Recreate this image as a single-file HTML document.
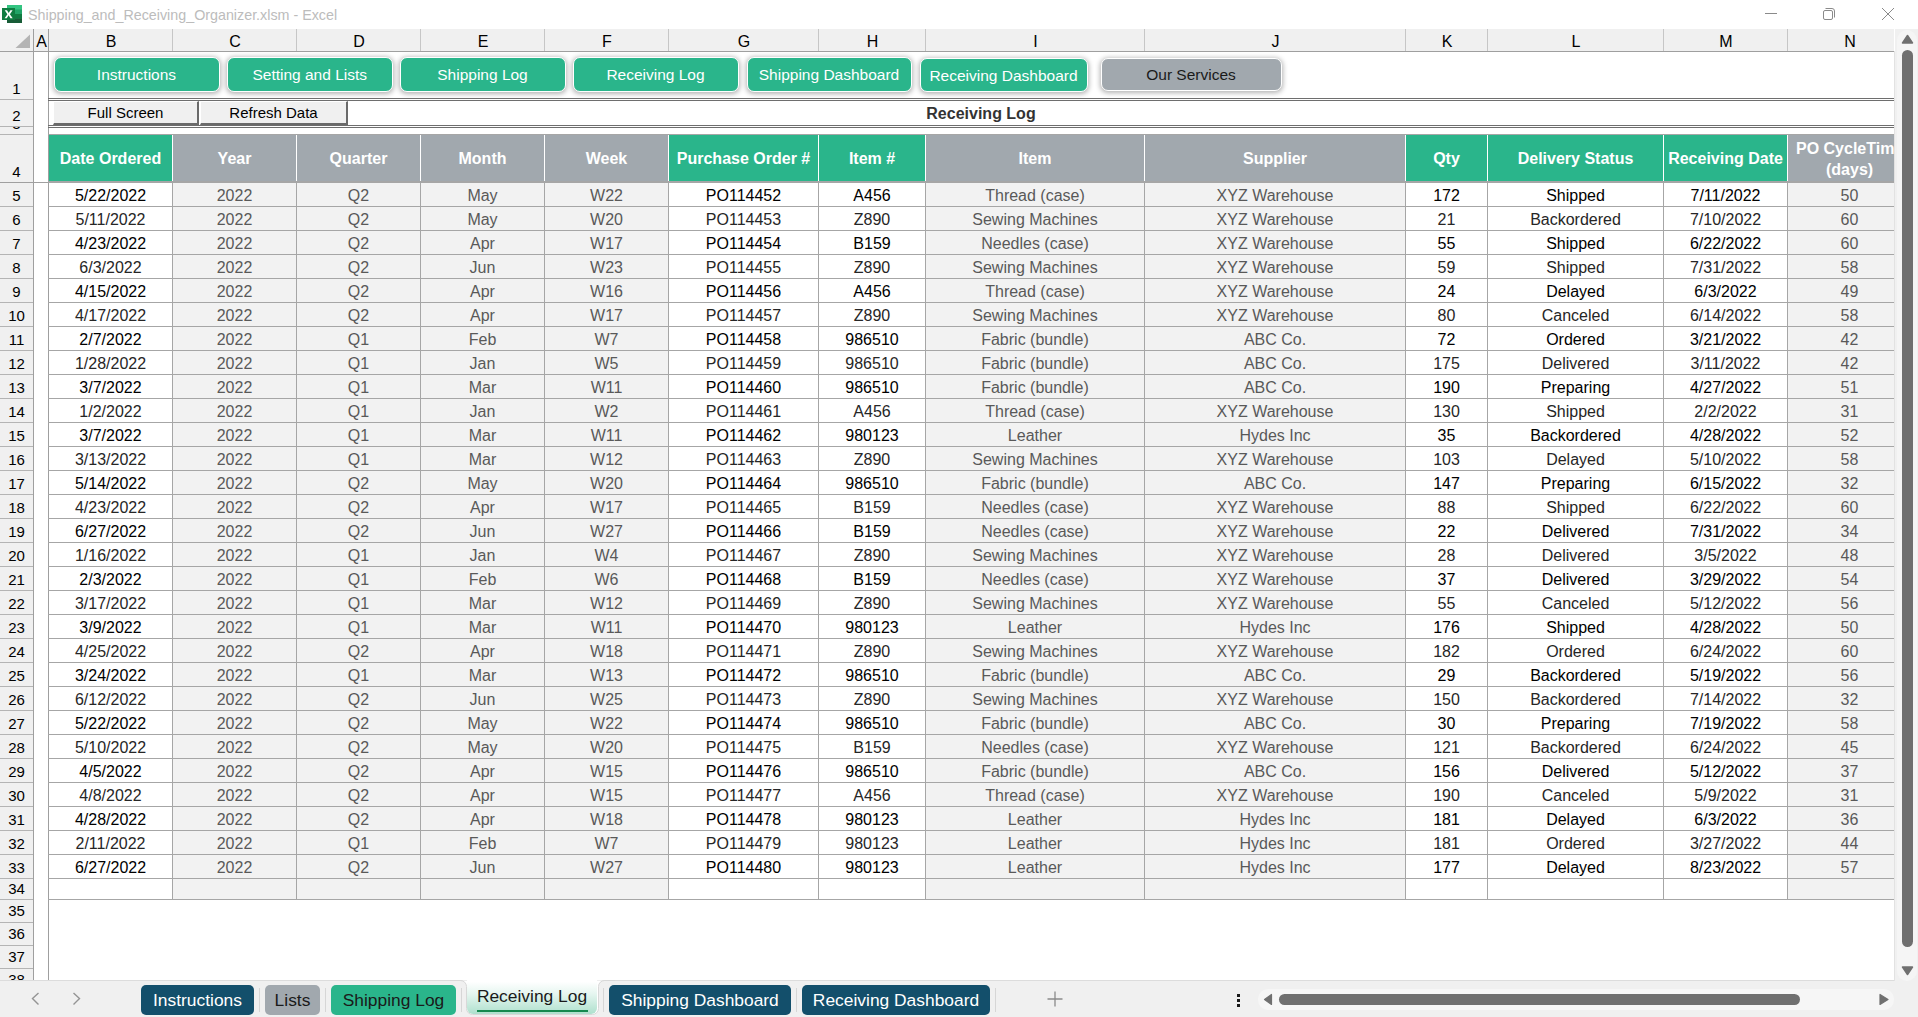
<!DOCTYPE html><html><head><meta charset="utf-8"><style>
*{box-sizing:border-box}
html,body{margin:0;padding:0}
body{width:1918px;height:1017px;overflow:hidden;position:relative;background:#fff;font-family:"Liberation Sans",sans-serif}
.a{position:absolute}
.ch{position:absolute;top:29px;height:22px;font-size:16px;color:#000;text-align:center;line-height:22px;padding-top:2px;padding-left:2px}
.rh{position:absolute;left:0;width:33px;font-size:15px;color:#000;text-align:center;overflow:hidden}
.cell{position:absolute;font-size:16px;text-align:center;white-space:nowrap;overflow:hidden;padding-top:1px}
.hl{position:absolute;height:1px;background:#a6a6a6}
.vl{position:absolute;width:1px;background:#a6a6a6}
.nb{position:absolute;border-radius:7px;background:#2ab58b;color:#fff;font-size:15.5px;text-align:center;border:1.5px solid #fff;box-shadow:0 1px 5px 1px rgba(0,0,0,.3);white-space:nowrap}
.tab{position:absolute;top:985px;height:30px;border-radius:5px;font-size:17.4px;text-align:center;line-height:30px;white-space:nowrap}
.sep{position:absolute;top:988px;width:1px;height:24px;background:#d6d6d6}
</style></head><body>

<svg class="a" style="left:0;top:0" width="26" height="28" viewBox="0 0 26 28">
<rect x="7" y="5" width="15" height="18" fill="#21a366"/>
<rect x="7" y="5" width="15" height="4.5" fill="#33c481"/>
<rect x="7" y="14" width="15" height="4.5" fill="#107c41"/>
<rect x="7" y="18.5" width="15" height="4.5" fill="#185c37"/>
<rect x="2" y="8" width="13" height="12" fill="#107c41"/>
<path d="M4.7 10.2h2.3l1.7 2.9 1.7-2.9h2.2l-2.7 4 2.8 4.1h-2.3l-1.8-3-1.8 3h-2.2l2.8-4.1z" fill="#fff"/>
</svg>
<div class="a" style="left:28px;top:6px;font-size:14.3px;color:#bcbcbc;white-space:nowrap;line-height:18px">Shipping_and_Receiving_Organizer.xlsm - Excel</div>
<svg class="a" style="left:1750px;top:0" width="168" height="29" viewBox="1750 0 168 29">
<path d="M1765 13.5h12" stroke="#8a8a8a" stroke-width="1"/>
<rect x="1823.5" y="10.5" width="9" height="9" rx="1.5" fill="none" stroke="#8a8a8a"/>
<path d="M1825.5 8.5h6.5a2.5 2.5 0 0 1 2.5 2.5v6.5" fill="none" stroke="#8a8a8a"/>
<path d="M1882 8l12 12M1894 8l-12 12" stroke="#8a8a8a" stroke-width="1"/>
</svg>
<div class="a" style="left:0;top:29px;width:1894px;height:22px;background:#f0f0f0"></div>
<div class="a" style="left:0;top:51px;width:33px;height:929px;background:#f0f0f0"></div>
<svg class="a" style="left:0;top:29px" width="33" height="22"><path d="M30 5.5V19H15.5z" fill="#b4b4b4"/></svg>
<div class="ch" style="left:33px;width:15px">A</div>
<div class="ch" style="left:48px;width:124px">B</div>
<div class="ch" style="left:172px;width:124px">C</div>
<div class="ch" style="left:296px;width:124px">D</div>
<div class="ch" style="left:420px;width:124px">E</div>
<div class="ch" style="left:544px;width:124px">F</div>
<div class="ch" style="left:668px;width:150px">G</div>
<div class="ch" style="left:818px;width:107px">H</div>
<div class="ch" style="left:925px;width:219px">I</div>
<div class="ch" style="left:1144px;width:261px">J</div>
<div class="ch" style="left:1405px;width:82px">K</div>
<div class="ch" style="left:1487px;width:176px">L</div>
<div class="ch" style="left:1663px;width:124px">M</div>
<div class="ch" style="left:1787px;width:124px">N</div>
<div class="a" style="left:33px;top:29px;width:1px;height:22px;background:#c6c6c6"></div>
<div class="a" style="left:48px;top:29px;width:1px;height:22px;background:#c6c6c6"></div>
<div class="a" style="left:172px;top:29px;width:1px;height:22px;background:#c6c6c6"></div>
<div class="a" style="left:296px;top:29px;width:1px;height:22px;background:#c6c6c6"></div>
<div class="a" style="left:420px;top:29px;width:1px;height:22px;background:#c6c6c6"></div>
<div class="a" style="left:544px;top:29px;width:1px;height:22px;background:#c6c6c6"></div>
<div class="a" style="left:668px;top:29px;width:1px;height:22px;background:#c6c6c6"></div>
<div class="a" style="left:818px;top:29px;width:1px;height:22px;background:#c6c6c6"></div>
<div class="a" style="left:925px;top:29px;width:1px;height:22px;background:#c6c6c6"></div>
<div class="a" style="left:1144px;top:29px;width:1px;height:22px;background:#c6c6c6"></div>
<div class="a" style="left:1405px;top:29px;width:1px;height:22px;background:#c6c6c6"></div>
<div class="a" style="left:1487px;top:29px;width:1px;height:22px;background:#c6c6c6"></div>
<div class="a" style="left:1663px;top:29px;width:1px;height:22px;background:#c6c6c6"></div>
<div class="a" style="left:1787px;top:29px;width:1px;height:22px;background:#c6c6c6"></div>
<div class="hl" style="left:0;top:51px;width:1894px;background:#9f9f9f"></div>
<div class="vl" style="left:33px;top:29px;height:951px;background:#9f9f9f"></div>
<div class="vl" style="left:48px;top:29px;height:951px;background:#9f9f9f"></div>
<div class="a" style="left:0;top:99px;width:33px;height:1px;background:#b4b4b4"></div>
<div class="rh" style="top:52px;height:47px"><span style="position:absolute;left:0;width:33px;top:26.799999999999997px;line-height:20px">1</span></div>
<div class="a" style="left:0;top:126px;width:33px;height:1px;background:#b4b4b4"></div>
<div class="rh" style="top:100px;height:26px"><span style="position:absolute;left:0;width:33px;top:5.800000000000001px;line-height:20px">2</span></div>
<div class="a" style="left:0;top:134px;width:33px;height:1px;background:#b4b4b4"></div>
<div class="rh" style="top:127px;height:7px"><span style="position:absolute;left:0;width:33px;top:-13.2px;line-height:20px">3</span></div>
<div class="a" style="left:0;top:182px;width:33px;height:1px;background:#b4b4b4"></div>
<div class="rh" style="top:135px;height:47px"><span style="position:absolute;left:0;width:33px;top:26.799999999999997px;line-height:20px">4</span></div>
<div class="a" style="left:0;top:206px;width:33px;height:1px;background:#b4b4b4"></div>
<div class="rh" style="top:183px;height:23px"><span style="position:absolute;left:0;width:33px;top:2.8000000000000007px;line-height:20px">5</span></div>
<div class="a" style="left:0;top:230px;width:33px;height:1px;background:#b4b4b4"></div>
<div class="rh" style="top:207px;height:23px"><span style="position:absolute;left:0;width:33px;top:2.8000000000000007px;line-height:20px">6</span></div>
<div class="a" style="left:0;top:254px;width:33px;height:1px;background:#b4b4b4"></div>
<div class="rh" style="top:231px;height:23px"><span style="position:absolute;left:0;width:33px;top:2.8000000000000007px;line-height:20px">7</span></div>
<div class="a" style="left:0;top:278px;width:33px;height:1px;background:#b4b4b4"></div>
<div class="rh" style="top:255px;height:23px"><span style="position:absolute;left:0;width:33px;top:2.8000000000000007px;line-height:20px">8</span></div>
<div class="a" style="left:0;top:302px;width:33px;height:1px;background:#b4b4b4"></div>
<div class="rh" style="top:279px;height:23px"><span style="position:absolute;left:0;width:33px;top:2.8000000000000007px;line-height:20px">9</span></div>
<div class="a" style="left:0;top:326px;width:33px;height:1px;background:#b4b4b4"></div>
<div class="rh" style="top:303px;height:23px"><span style="position:absolute;left:0;width:33px;top:2.8000000000000007px;line-height:20px">10</span></div>
<div class="a" style="left:0;top:350px;width:33px;height:1px;background:#b4b4b4"></div>
<div class="rh" style="top:327px;height:23px"><span style="position:absolute;left:0;width:33px;top:2.8000000000000007px;line-height:20px">11</span></div>
<div class="a" style="left:0;top:374px;width:33px;height:1px;background:#b4b4b4"></div>
<div class="rh" style="top:351px;height:23px"><span style="position:absolute;left:0;width:33px;top:2.8000000000000007px;line-height:20px">12</span></div>
<div class="a" style="left:0;top:398px;width:33px;height:1px;background:#b4b4b4"></div>
<div class="rh" style="top:375px;height:23px"><span style="position:absolute;left:0;width:33px;top:2.8000000000000007px;line-height:20px">13</span></div>
<div class="a" style="left:0;top:422px;width:33px;height:1px;background:#b4b4b4"></div>
<div class="rh" style="top:399px;height:23px"><span style="position:absolute;left:0;width:33px;top:2.8000000000000007px;line-height:20px">14</span></div>
<div class="a" style="left:0;top:446px;width:33px;height:1px;background:#b4b4b4"></div>
<div class="rh" style="top:423px;height:23px"><span style="position:absolute;left:0;width:33px;top:2.8000000000000007px;line-height:20px">15</span></div>
<div class="a" style="left:0;top:470px;width:33px;height:1px;background:#b4b4b4"></div>
<div class="rh" style="top:447px;height:23px"><span style="position:absolute;left:0;width:33px;top:2.8000000000000007px;line-height:20px">16</span></div>
<div class="a" style="left:0;top:494px;width:33px;height:1px;background:#b4b4b4"></div>
<div class="rh" style="top:471px;height:23px"><span style="position:absolute;left:0;width:33px;top:2.8000000000000007px;line-height:20px">17</span></div>
<div class="a" style="left:0;top:518px;width:33px;height:1px;background:#b4b4b4"></div>
<div class="rh" style="top:495px;height:23px"><span style="position:absolute;left:0;width:33px;top:2.8000000000000007px;line-height:20px">18</span></div>
<div class="a" style="left:0;top:542px;width:33px;height:1px;background:#b4b4b4"></div>
<div class="rh" style="top:519px;height:23px"><span style="position:absolute;left:0;width:33px;top:2.8000000000000007px;line-height:20px">19</span></div>
<div class="a" style="left:0;top:566px;width:33px;height:1px;background:#b4b4b4"></div>
<div class="rh" style="top:543px;height:23px"><span style="position:absolute;left:0;width:33px;top:2.8000000000000007px;line-height:20px">20</span></div>
<div class="a" style="left:0;top:590px;width:33px;height:1px;background:#b4b4b4"></div>
<div class="rh" style="top:567px;height:23px"><span style="position:absolute;left:0;width:33px;top:2.8000000000000007px;line-height:20px">21</span></div>
<div class="a" style="left:0;top:614px;width:33px;height:1px;background:#b4b4b4"></div>
<div class="rh" style="top:591px;height:23px"><span style="position:absolute;left:0;width:33px;top:2.8000000000000007px;line-height:20px">22</span></div>
<div class="a" style="left:0;top:638px;width:33px;height:1px;background:#b4b4b4"></div>
<div class="rh" style="top:615px;height:23px"><span style="position:absolute;left:0;width:33px;top:2.8000000000000007px;line-height:20px">23</span></div>
<div class="a" style="left:0;top:662px;width:33px;height:1px;background:#b4b4b4"></div>
<div class="rh" style="top:639px;height:23px"><span style="position:absolute;left:0;width:33px;top:2.8000000000000007px;line-height:20px">24</span></div>
<div class="a" style="left:0;top:686px;width:33px;height:1px;background:#b4b4b4"></div>
<div class="rh" style="top:663px;height:23px"><span style="position:absolute;left:0;width:33px;top:2.8000000000000007px;line-height:20px">25</span></div>
<div class="a" style="left:0;top:710px;width:33px;height:1px;background:#b4b4b4"></div>
<div class="rh" style="top:687px;height:23px"><span style="position:absolute;left:0;width:33px;top:2.8000000000000007px;line-height:20px">26</span></div>
<div class="a" style="left:0;top:734px;width:33px;height:1px;background:#b4b4b4"></div>
<div class="rh" style="top:711px;height:23px"><span style="position:absolute;left:0;width:33px;top:2.8000000000000007px;line-height:20px">27</span></div>
<div class="a" style="left:0;top:758px;width:33px;height:1px;background:#b4b4b4"></div>
<div class="rh" style="top:735px;height:23px"><span style="position:absolute;left:0;width:33px;top:2.8000000000000007px;line-height:20px">28</span></div>
<div class="a" style="left:0;top:782px;width:33px;height:1px;background:#b4b4b4"></div>
<div class="rh" style="top:759px;height:23px"><span style="position:absolute;left:0;width:33px;top:2.8000000000000007px;line-height:20px">29</span></div>
<div class="a" style="left:0;top:806px;width:33px;height:1px;background:#b4b4b4"></div>
<div class="rh" style="top:783px;height:23px"><span style="position:absolute;left:0;width:33px;top:2.8000000000000007px;line-height:20px">30</span></div>
<div class="a" style="left:0;top:830px;width:33px;height:1px;background:#b4b4b4"></div>
<div class="rh" style="top:807px;height:23px"><span style="position:absolute;left:0;width:33px;top:2.8000000000000007px;line-height:20px">31</span></div>
<div class="a" style="left:0;top:854px;width:33px;height:1px;background:#b4b4b4"></div>
<div class="rh" style="top:831px;height:23px"><span style="position:absolute;left:0;width:33px;top:2.8000000000000007px;line-height:20px">32</span></div>
<div class="a" style="left:0;top:878px;width:33px;height:1px;background:#b4b4b4"></div>
<div class="rh" style="top:855px;height:23px"><span style="position:absolute;left:0;width:33px;top:2.8000000000000007px;line-height:20px">33</span></div>
<div class="a" style="left:0;top:899px;width:33px;height:1px;background:#b4b4b4"></div>
<div class="rh" style="top:879px;height:20px"><span style="position:absolute;left:0;width:33px;top:-0.1999999999999993px;line-height:20px">34</span></div>
<div class="a" style="left:0;top:922px;width:33px;height:1px;background:#b4b4b4"></div>
<div class="rh" style="top:900px;height:22px"><span style="position:absolute;left:0;width:33px;top:0.8000000000000007px;line-height:20px">35</span></div>
<div class="a" style="left:0;top:945px;width:33px;height:1px;background:#b4b4b4"></div>
<div class="rh" style="top:923px;height:22px"><span style="position:absolute;left:0;width:33px;top:0.8000000000000007px;line-height:20px">36</span></div>
<div class="a" style="left:0;top:968px;width:33px;height:1px;background:#b4b4b4"></div>
<div class="rh" style="top:946px;height:22px"><span style="position:absolute;left:0;width:33px;top:0.8000000000000007px;line-height:20px">37</span></div>
<div class="a" style="left:0;top:991px;width:33px;height:1px;background:#b4b4b4"></div>
<div class="rh" style="top:969px;height:22px"><span style="position:absolute;left:0;width:33px;top:0.8000000000000007px;line-height:20px">38</span></div>
<div class="a" style="left:0;top:980px;width:1918px;height:37px;background:#f0f0f0"></div>
<div class="a" style="left:0;top:182px;width:48px;height:1px;background:#a0a0a0"></div>
<div class="nb" style="left:53.5px;top:56.5px;width:166px;height:35px;background:#2ab58b;color:#fff;line-height:32px;padding-top:1.5px">Instructions</div>
<div class="nb" style="left:226.5px;top:56.5px;width:166.5px;height:35px;background:#2ab58b;color:#fff;line-height:32px;padding-top:1.5px">Setting and Lists</div>
<div class="nb" style="left:399.5px;top:56.5px;width:166px;height:35px;background:#2ab58b;color:#fff;line-height:32px;padding-top:1.5px">Shipping Log</div>
<div class="nb" style="left:572.5px;top:56.5px;width:166px;height:35px;background:#2ab58b;color:#fff;line-height:32px;padding-top:1.5px">Receiving Log</div>
<div class="nb" style="left:746.5px;top:56.5px;width:165px;height:35px;background:#2ab58b;color:#fff;line-height:32px;padding-top:1.5px">Shipping Dashboard</div>
<div class="nb" style="left:919.5px;top:58.0px;width:168px;height:33.5px;background:#2ab58b;color:#fff;line-height:30.5px;padding-top:1.5px">Receiving Dashboard</div>
<div class="nb" style="left:1100.5px;top:57.5px;width:181px;height:33px;background:#a1a8ae;color:#1a1a1a;line-height:30px;padding-top:1.5px">Our Services</div>
<div class="hl" style="left:48px;top:98px;width:1846px;background:#6e6e6e"></div>
<div class="hl" style="left:48px;top:100px;width:1846px;background:#6e6e6e"></div>
<div class="hl" style="left:48px;top:125px;width:1846px;background:#6e6e6e"></div>
<div class="hl" style="left:48px;top:127px;width:1846px;background:#6e6e6e"></div>
<div class="a" style="left:53px;top:101px;width:146px;height:24px;background:#f0f0f0;border-top:1px solid #fff;border-left:1px solid #fff;border-right:2px solid #6a6a6a;border-bottom:2px solid #6a6a6a;font-size:15px;text-align:center;line-height:21px;color:#000">Full Screen</div>
<div class="a" style="left:200px;top:101px;width:148px;height:24px;background:#f0f0f0;border-top:1px solid #fff;border-left:1px solid #fff;border-right:2px solid #6a6a6a;border-bottom:2px solid #6a6a6a;font-size:15px;text-align:center;line-height:21px;color:#000">Refresh Data</div>
<div class="a" style="left:881px;top:102px;width:200px;text-align:center;font-weight:bold;font-size:16px;line-height:24px;color:#333">Receiving Log</div>
<div class="hl" style="left:48px;top:134px;width:1846px;background:#a6a6a6"></div>
<div class="a" style="left:49px;top:135px;width:123px;height:46px;background:#2ab58b;color:#fff;font-weight:bold;font-size:16px;line-height:46px;padding-top:1px;text-align:center;white-space:nowrap;overflow:hidden">Date Ordered</div>
<div class="a" style="left:173px;top:135px;width:123px;height:46px;background:#a1a8ae;color:#fff;font-weight:bold;font-size:16px;line-height:46px;padding-top:1px;text-align:center;white-space:nowrap;overflow:hidden">Year</div>
<div class="a" style="left:297px;top:135px;width:123px;height:46px;background:#a1a8ae;color:#fff;font-weight:bold;font-size:16px;line-height:46px;padding-top:1px;text-align:center;white-space:nowrap;overflow:hidden">Quarter</div>
<div class="a" style="left:421px;top:135px;width:123px;height:46px;background:#a1a8ae;color:#fff;font-weight:bold;font-size:16px;line-height:46px;padding-top:1px;text-align:center;white-space:nowrap;overflow:hidden">Month</div>
<div class="a" style="left:545px;top:135px;width:123px;height:46px;background:#a1a8ae;color:#fff;font-weight:bold;font-size:16px;line-height:46px;padding-top:1px;text-align:center;white-space:nowrap;overflow:hidden">Week</div>
<div class="a" style="left:669px;top:135px;width:149px;height:46px;background:#2ab58b;color:#fff;font-weight:bold;font-size:16px;line-height:46px;padding-top:1px;text-align:center;white-space:nowrap;overflow:hidden">Purchase Order #</div>
<div class="a" style="left:819px;top:135px;width:106px;height:46px;background:#2ab58b;color:#fff;font-weight:bold;font-size:16px;line-height:46px;padding-top:1px;text-align:center;white-space:nowrap;overflow:hidden">Item #</div>
<div class="a" style="left:926px;top:135px;width:218px;height:46px;background:#a1a8ae;color:#fff;font-weight:bold;font-size:16px;line-height:46px;padding-top:1px;text-align:center;white-space:nowrap;overflow:hidden">Item</div>
<div class="a" style="left:1145px;top:135px;width:260px;height:46px;background:#a1a8ae;color:#fff;font-weight:bold;font-size:16px;line-height:46px;padding-top:1px;text-align:center;white-space:nowrap;overflow:hidden">Supplier</div>
<div class="a" style="left:1406px;top:135px;width:81px;height:46px;background:#2ab58b;color:#fff;font-weight:bold;font-size:16px;line-height:46px;padding-top:1px;text-align:center;white-space:nowrap;overflow:hidden">Qty</div>
<div class="a" style="left:1488px;top:135px;width:175px;height:46px;background:#2ab58b;color:#fff;font-weight:bold;font-size:16px;line-height:46px;padding-top:1px;text-align:center;white-space:nowrap;overflow:hidden">Delivery Status</div>
<div class="a" style="left:1664px;top:135px;width:123px;height:46px;background:#2ab58b;color:#fff;font-weight:bold;font-size:16px;line-height:46px;padding-top:1px;text-align:center;white-space:nowrap;overflow:hidden">Receiving Date</div>
<div class="a" style="left:1788px;top:135px;width:123px;height:46px;background:#a1a8ae;color:#fff;font-weight:bold;font-size:16px;line-height:20.5px;padding-top:4.3px;text-align:left;padding-left:8px;white-space:nowrap;overflow:hidden">PO CycleTim<br><span style="padding-left:30px">(days)</span></div>
<div class="a" style="left:172px;top:135px;width:1px;height:46px;background:#fff"></div>
<div class="a" style="left:296px;top:135px;width:1px;height:46px;background:#fff"></div>
<div class="a" style="left:420px;top:135px;width:1px;height:46px;background:#fff"></div>
<div class="a" style="left:544px;top:135px;width:1px;height:46px;background:#fff"></div>
<div class="a" style="left:668px;top:135px;width:1px;height:46px;background:#fff"></div>
<div class="a" style="left:818px;top:135px;width:1px;height:46px;background:#fff"></div>
<div class="a" style="left:925px;top:135px;width:1px;height:46px;background:#fff"></div>
<div class="a" style="left:1144px;top:135px;width:1px;height:46px;background:#fff"></div>
<div class="a" style="left:1405px;top:135px;width:1px;height:46px;background:#fff"></div>
<div class="a" style="left:1487px;top:135px;width:1px;height:46px;background:#fff"></div>
<div class="a" style="left:1663px;top:135px;width:1px;height:46px;background:#fff"></div>
<div class="a" style="left:1787px;top:135px;width:1px;height:46px;background:#fff"></div>
<div class="a" style="left:48px;top:181px;width:1846px;height:2px;background:#a6a6a6"></div>
<div class="cell" style="left:49px;top:183px;width:123px;height:23px;background:#fff;color:#000;line-height:23px">5/22/2022</div>
<div class="cell" style="left:173px;top:183px;width:123px;height:23px;background:#f2f2f2;color:#595959;line-height:23px">2022</div>
<div class="cell" style="left:297px;top:183px;width:123px;height:23px;background:#f2f2f2;color:#595959;line-height:23px">Q2</div>
<div class="cell" style="left:421px;top:183px;width:123px;height:23px;background:#f2f2f2;color:#595959;line-height:23px">May</div>
<div class="cell" style="left:545px;top:183px;width:123px;height:23px;background:#f2f2f2;color:#595959;line-height:23px">W22</div>
<div class="cell" style="left:669px;top:183px;width:149px;height:23px;background:#fff;color:#000;line-height:23px">PO114452</div>
<div class="cell" style="left:819px;top:183px;width:106px;height:23px;background:#fff;color:#000;line-height:23px">A456</div>
<div class="cell" style="left:926px;top:183px;width:218px;height:23px;background:#f2f2f2;color:#595959;line-height:23px">Thread (case)</div>
<div class="cell" style="left:1145px;top:183px;width:260px;height:23px;background:#f2f2f2;color:#595959;line-height:23px">XYZ Warehouse</div>
<div class="cell" style="left:1406px;top:183px;width:81px;height:23px;background:#fff;color:#000;line-height:23px">172</div>
<div class="cell" style="left:1488px;top:183px;width:175px;height:23px;background:#fff;color:#000;line-height:23px">Shipped</div>
<div class="cell" style="left:1664px;top:183px;width:123px;height:23px;background:#fff;color:#000;line-height:23px">7/11/2022</div>
<div class="cell" style="left:1788px;top:183px;width:123px;height:23px;background:#f2f2f2;color:#595959;line-height:23px">50</div>
<div class="hl" style="left:48px;top:206px;width:1846px"></div>
<div class="cell" style="left:49px;top:207px;width:123px;height:23px;background:#fff;color:#262626;line-height:23px">5/11/2022</div>
<div class="cell" style="left:173px;top:207px;width:123px;height:23px;background:#f2f2f2;color:#595959;line-height:23px">2022</div>
<div class="cell" style="left:297px;top:207px;width:123px;height:23px;background:#f2f2f2;color:#595959;line-height:23px">Q2</div>
<div class="cell" style="left:421px;top:207px;width:123px;height:23px;background:#f2f2f2;color:#595959;line-height:23px">May</div>
<div class="cell" style="left:545px;top:207px;width:123px;height:23px;background:#f2f2f2;color:#595959;line-height:23px">W20</div>
<div class="cell" style="left:669px;top:207px;width:149px;height:23px;background:#fff;color:#262626;line-height:23px">PO114453</div>
<div class="cell" style="left:819px;top:207px;width:106px;height:23px;background:#fff;color:#262626;line-height:23px">Z890</div>
<div class="cell" style="left:926px;top:207px;width:218px;height:23px;background:#f2f2f2;color:#595959;line-height:23px">Sewing Machines</div>
<div class="cell" style="left:1145px;top:207px;width:260px;height:23px;background:#f2f2f2;color:#595959;line-height:23px">XYZ Warehouse</div>
<div class="cell" style="left:1406px;top:207px;width:81px;height:23px;background:#fff;color:#262626;line-height:23px">21</div>
<div class="cell" style="left:1488px;top:207px;width:175px;height:23px;background:#fff;color:#262626;line-height:23px">Backordered</div>
<div class="cell" style="left:1664px;top:207px;width:123px;height:23px;background:#fff;color:#262626;line-height:23px">7/10/2022</div>
<div class="cell" style="left:1788px;top:207px;width:123px;height:23px;background:#f2f2f2;color:#595959;line-height:23px">60</div>
<div class="hl" style="left:48px;top:230px;width:1846px"></div>
<div class="cell" style="left:49px;top:231px;width:123px;height:23px;background:#fff;color:#000;line-height:23px">4/23/2022</div>
<div class="cell" style="left:173px;top:231px;width:123px;height:23px;background:#f2f2f2;color:#595959;line-height:23px">2022</div>
<div class="cell" style="left:297px;top:231px;width:123px;height:23px;background:#f2f2f2;color:#595959;line-height:23px">Q2</div>
<div class="cell" style="left:421px;top:231px;width:123px;height:23px;background:#f2f2f2;color:#595959;line-height:23px">Apr</div>
<div class="cell" style="left:545px;top:231px;width:123px;height:23px;background:#f2f2f2;color:#595959;line-height:23px">W17</div>
<div class="cell" style="left:669px;top:231px;width:149px;height:23px;background:#fff;color:#000;line-height:23px">PO114454</div>
<div class="cell" style="left:819px;top:231px;width:106px;height:23px;background:#fff;color:#000;line-height:23px">B159</div>
<div class="cell" style="left:926px;top:231px;width:218px;height:23px;background:#f2f2f2;color:#595959;line-height:23px">Needles (case)</div>
<div class="cell" style="left:1145px;top:231px;width:260px;height:23px;background:#f2f2f2;color:#595959;line-height:23px">XYZ Warehouse</div>
<div class="cell" style="left:1406px;top:231px;width:81px;height:23px;background:#fff;color:#000;line-height:23px">55</div>
<div class="cell" style="left:1488px;top:231px;width:175px;height:23px;background:#fff;color:#000;line-height:23px">Shipped</div>
<div class="cell" style="left:1664px;top:231px;width:123px;height:23px;background:#fff;color:#000;line-height:23px">6/22/2022</div>
<div class="cell" style="left:1788px;top:231px;width:123px;height:23px;background:#f2f2f2;color:#595959;line-height:23px">60</div>
<div class="hl" style="left:48px;top:254px;width:1846px"></div>
<div class="cell" style="left:49px;top:255px;width:123px;height:23px;background:#fff;color:#262626;line-height:23px">6/3/2022</div>
<div class="cell" style="left:173px;top:255px;width:123px;height:23px;background:#f2f2f2;color:#595959;line-height:23px">2022</div>
<div class="cell" style="left:297px;top:255px;width:123px;height:23px;background:#f2f2f2;color:#595959;line-height:23px">Q2</div>
<div class="cell" style="left:421px;top:255px;width:123px;height:23px;background:#f2f2f2;color:#595959;line-height:23px">Jun</div>
<div class="cell" style="left:545px;top:255px;width:123px;height:23px;background:#f2f2f2;color:#595959;line-height:23px">W23</div>
<div class="cell" style="left:669px;top:255px;width:149px;height:23px;background:#fff;color:#262626;line-height:23px">PO114455</div>
<div class="cell" style="left:819px;top:255px;width:106px;height:23px;background:#fff;color:#262626;line-height:23px">Z890</div>
<div class="cell" style="left:926px;top:255px;width:218px;height:23px;background:#f2f2f2;color:#595959;line-height:23px">Sewing Machines</div>
<div class="cell" style="left:1145px;top:255px;width:260px;height:23px;background:#f2f2f2;color:#595959;line-height:23px">XYZ Warehouse</div>
<div class="cell" style="left:1406px;top:255px;width:81px;height:23px;background:#fff;color:#262626;line-height:23px">59</div>
<div class="cell" style="left:1488px;top:255px;width:175px;height:23px;background:#fff;color:#262626;line-height:23px">Shipped</div>
<div class="cell" style="left:1664px;top:255px;width:123px;height:23px;background:#fff;color:#262626;line-height:23px">7/31/2022</div>
<div class="cell" style="left:1788px;top:255px;width:123px;height:23px;background:#f2f2f2;color:#595959;line-height:23px">58</div>
<div class="hl" style="left:48px;top:278px;width:1846px"></div>
<div class="cell" style="left:49px;top:279px;width:123px;height:23px;background:#fff;color:#000;line-height:23px">4/15/2022</div>
<div class="cell" style="left:173px;top:279px;width:123px;height:23px;background:#f2f2f2;color:#595959;line-height:23px">2022</div>
<div class="cell" style="left:297px;top:279px;width:123px;height:23px;background:#f2f2f2;color:#595959;line-height:23px">Q2</div>
<div class="cell" style="left:421px;top:279px;width:123px;height:23px;background:#f2f2f2;color:#595959;line-height:23px">Apr</div>
<div class="cell" style="left:545px;top:279px;width:123px;height:23px;background:#f2f2f2;color:#595959;line-height:23px">W16</div>
<div class="cell" style="left:669px;top:279px;width:149px;height:23px;background:#fff;color:#000;line-height:23px">PO114456</div>
<div class="cell" style="left:819px;top:279px;width:106px;height:23px;background:#fff;color:#000;line-height:23px">A456</div>
<div class="cell" style="left:926px;top:279px;width:218px;height:23px;background:#f2f2f2;color:#595959;line-height:23px">Thread (case)</div>
<div class="cell" style="left:1145px;top:279px;width:260px;height:23px;background:#f2f2f2;color:#595959;line-height:23px">XYZ Warehouse</div>
<div class="cell" style="left:1406px;top:279px;width:81px;height:23px;background:#fff;color:#000;line-height:23px">24</div>
<div class="cell" style="left:1488px;top:279px;width:175px;height:23px;background:#fff;color:#000;line-height:23px">Delayed</div>
<div class="cell" style="left:1664px;top:279px;width:123px;height:23px;background:#fff;color:#000;line-height:23px">6/3/2022</div>
<div class="cell" style="left:1788px;top:279px;width:123px;height:23px;background:#f2f2f2;color:#595959;line-height:23px">49</div>
<div class="hl" style="left:48px;top:302px;width:1846px"></div>
<div class="cell" style="left:49px;top:303px;width:123px;height:23px;background:#fff;color:#262626;line-height:23px">4/17/2022</div>
<div class="cell" style="left:173px;top:303px;width:123px;height:23px;background:#f2f2f2;color:#595959;line-height:23px">2022</div>
<div class="cell" style="left:297px;top:303px;width:123px;height:23px;background:#f2f2f2;color:#595959;line-height:23px">Q2</div>
<div class="cell" style="left:421px;top:303px;width:123px;height:23px;background:#f2f2f2;color:#595959;line-height:23px">Apr</div>
<div class="cell" style="left:545px;top:303px;width:123px;height:23px;background:#f2f2f2;color:#595959;line-height:23px">W17</div>
<div class="cell" style="left:669px;top:303px;width:149px;height:23px;background:#fff;color:#262626;line-height:23px">PO114457</div>
<div class="cell" style="left:819px;top:303px;width:106px;height:23px;background:#fff;color:#262626;line-height:23px">Z890</div>
<div class="cell" style="left:926px;top:303px;width:218px;height:23px;background:#f2f2f2;color:#595959;line-height:23px">Sewing Machines</div>
<div class="cell" style="left:1145px;top:303px;width:260px;height:23px;background:#f2f2f2;color:#595959;line-height:23px">XYZ Warehouse</div>
<div class="cell" style="left:1406px;top:303px;width:81px;height:23px;background:#fff;color:#262626;line-height:23px">80</div>
<div class="cell" style="left:1488px;top:303px;width:175px;height:23px;background:#fff;color:#262626;line-height:23px">Canceled</div>
<div class="cell" style="left:1664px;top:303px;width:123px;height:23px;background:#fff;color:#262626;line-height:23px">6/14/2022</div>
<div class="cell" style="left:1788px;top:303px;width:123px;height:23px;background:#f2f2f2;color:#595959;line-height:23px">58</div>
<div class="hl" style="left:48px;top:326px;width:1846px"></div>
<div class="cell" style="left:49px;top:327px;width:123px;height:23px;background:#fff;color:#000;line-height:23px">2/7/2022</div>
<div class="cell" style="left:173px;top:327px;width:123px;height:23px;background:#f2f2f2;color:#595959;line-height:23px">2022</div>
<div class="cell" style="left:297px;top:327px;width:123px;height:23px;background:#f2f2f2;color:#595959;line-height:23px">Q1</div>
<div class="cell" style="left:421px;top:327px;width:123px;height:23px;background:#f2f2f2;color:#595959;line-height:23px">Feb</div>
<div class="cell" style="left:545px;top:327px;width:123px;height:23px;background:#f2f2f2;color:#595959;line-height:23px">W7</div>
<div class="cell" style="left:669px;top:327px;width:149px;height:23px;background:#fff;color:#000;line-height:23px">PO114458</div>
<div class="cell" style="left:819px;top:327px;width:106px;height:23px;background:#fff;color:#000;line-height:23px">986510</div>
<div class="cell" style="left:926px;top:327px;width:218px;height:23px;background:#f2f2f2;color:#595959;line-height:23px">Fabric (bundle)</div>
<div class="cell" style="left:1145px;top:327px;width:260px;height:23px;background:#f2f2f2;color:#595959;line-height:23px">ABC Co.</div>
<div class="cell" style="left:1406px;top:327px;width:81px;height:23px;background:#fff;color:#000;line-height:23px">72</div>
<div class="cell" style="left:1488px;top:327px;width:175px;height:23px;background:#fff;color:#000;line-height:23px">Ordered</div>
<div class="cell" style="left:1664px;top:327px;width:123px;height:23px;background:#fff;color:#000;line-height:23px">3/21/2022</div>
<div class="cell" style="left:1788px;top:327px;width:123px;height:23px;background:#f2f2f2;color:#595959;line-height:23px">42</div>
<div class="hl" style="left:48px;top:350px;width:1846px"></div>
<div class="cell" style="left:49px;top:351px;width:123px;height:23px;background:#fff;color:#262626;line-height:23px">1/28/2022</div>
<div class="cell" style="left:173px;top:351px;width:123px;height:23px;background:#f2f2f2;color:#595959;line-height:23px">2022</div>
<div class="cell" style="left:297px;top:351px;width:123px;height:23px;background:#f2f2f2;color:#595959;line-height:23px">Q1</div>
<div class="cell" style="left:421px;top:351px;width:123px;height:23px;background:#f2f2f2;color:#595959;line-height:23px">Jan</div>
<div class="cell" style="left:545px;top:351px;width:123px;height:23px;background:#f2f2f2;color:#595959;line-height:23px">W5</div>
<div class="cell" style="left:669px;top:351px;width:149px;height:23px;background:#fff;color:#262626;line-height:23px">PO114459</div>
<div class="cell" style="left:819px;top:351px;width:106px;height:23px;background:#fff;color:#262626;line-height:23px">986510</div>
<div class="cell" style="left:926px;top:351px;width:218px;height:23px;background:#f2f2f2;color:#595959;line-height:23px">Fabric (bundle)</div>
<div class="cell" style="left:1145px;top:351px;width:260px;height:23px;background:#f2f2f2;color:#595959;line-height:23px">ABC Co.</div>
<div class="cell" style="left:1406px;top:351px;width:81px;height:23px;background:#fff;color:#262626;line-height:23px">175</div>
<div class="cell" style="left:1488px;top:351px;width:175px;height:23px;background:#fff;color:#262626;line-height:23px">Delivered</div>
<div class="cell" style="left:1664px;top:351px;width:123px;height:23px;background:#fff;color:#262626;line-height:23px">3/11/2022</div>
<div class="cell" style="left:1788px;top:351px;width:123px;height:23px;background:#f2f2f2;color:#595959;line-height:23px">42</div>
<div class="hl" style="left:48px;top:374px;width:1846px"></div>
<div class="cell" style="left:49px;top:375px;width:123px;height:23px;background:#fff;color:#000;line-height:23px">3/7/2022</div>
<div class="cell" style="left:173px;top:375px;width:123px;height:23px;background:#f2f2f2;color:#595959;line-height:23px">2022</div>
<div class="cell" style="left:297px;top:375px;width:123px;height:23px;background:#f2f2f2;color:#595959;line-height:23px">Q1</div>
<div class="cell" style="left:421px;top:375px;width:123px;height:23px;background:#f2f2f2;color:#595959;line-height:23px">Mar</div>
<div class="cell" style="left:545px;top:375px;width:123px;height:23px;background:#f2f2f2;color:#595959;line-height:23px">W11</div>
<div class="cell" style="left:669px;top:375px;width:149px;height:23px;background:#fff;color:#000;line-height:23px">PO114460</div>
<div class="cell" style="left:819px;top:375px;width:106px;height:23px;background:#fff;color:#000;line-height:23px">986510</div>
<div class="cell" style="left:926px;top:375px;width:218px;height:23px;background:#f2f2f2;color:#595959;line-height:23px">Fabric (bundle)</div>
<div class="cell" style="left:1145px;top:375px;width:260px;height:23px;background:#f2f2f2;color:#595959;line-height:23px">ABC Co.</div>
<div class="cell" style="left:1406px;top:375px;width:81px;height:23px;background:#fff;color:#000;line-height:23px">190</div>
<div class="cell" style="left:1488px;top:375px;width:175px;height:23px;background:#fff;color:#000;line-height:23px">Preparing</div>
<div class="cell" style="left:1664px;top:375px;width:123px;height:23px;background:#fff;color:#000;line-height:23px">4/27/2022</div>
<div class="cell" style="left:1788px;top:375px;width:123px;height:23px;background:#f2f2f2;color:#595959;line-height:23px">51</div>
<div class="hl" style="left:48px;top:398px;width:1846px"></div>
<div class="cell" style="left:49px;top:399px;width:123px;height:23px;background:#fff;color:#262626;line-height:23px">1/2/2022</div>
<div class="cell" style="left:173px;top:399px;width:123px;height:23px;background:#f2f2f2;color:#595959;line-height:23px">2022</div>
<div class="cell" style="left:297px;top:399px;width:123px;height:23px;background:#f2f2f2;color:#595959;line-height:23px">Q1</div>
<div class="cell" style="left:421px;top:399px;width:123px;height:23px;background:#f2f2f2;color:#595959;line-height:23px">Jan</div>
<div class="cell" style="left:545px;top:399px;width:123px;height:23px;background:#f2f2f2;color:#595959;line-height:23px">W2</div>
<div class="cell" style="left:669px;top:399px;width:149px;height:23px;background:#fff;color:#262626;line-height:23px">PO114461</div>
<div class="cell" style="left:819px;top:399px;width:106px;height:23px;background:#fff;color:#262626;line-height:23px">A456</div>
<div class="cell" style="left:926px;top:399px;width:218px;height:23px;background:#f2f2f2;color:#595959;line-height:23px">Thread (case)</div>
<div class="cell" style="left:1145px;top:399px;width:260px;height:23px;background:#f2f2f2;color:#595959;line-height:23px">XYZ Warehouse</div>
<div class="cell" style="left:1406px;top:399px;width:81px;height:23px;background:#fff;color:#262626;line-height:23px">130</div>
<div class="cell" style="left:1488px;top:399px;width:175px;height:23px;background:#fff;color:#262626;line-height:23px">Shipped</div>
<div class="cell" style="left:1664px;top:399px;width:123px;height:23px;background:#fff;color:#262626;line-height:23px">2/2/2022</div>
<div class="cell" style="left:1788px;top:399px;width:123px;height:23px;background:#f2f2f2;color:#595959;line-height:23px">31</div>
<div class="hl" style="left:48px;top:422px;width:1846px"></div>
<div class="cell" style="left:49px;top:423px;width:123px;height:23px;background:#fff;color:#000;line-height:23px">3/7/2022</div>
<div class="cell" style="left:173px;top:423px;width:123px;height:23px;background:#f2f2f2;color:#595959;line-height:23px">2022</div>
<div class="cell" style="left:297px;top:423px;width:123px;height:23px;background:#f2f2f2;color:#595959;line-height:23px">Q1</div>
<div class="cell" style="left:421px;top:423px;width:123px;height:23px;background:#f2f2f2;color:#595959;line-height:23px">Mar</div>
<div class="cell" style="left:545px;top:423px;width:123px;height:23px;background:#f2f2f2;color:#595959;line-height:23px">W11</div>
<div class="cell" style="left:669px;top:423px;width:149px;height:23px;background:#fff;color:#000;line-height:23px">PO114462</div>
<div class="cell" style="left:819px;top:423px;width:106px;height:23px;background:#fff;color:#000;line-height:23px">980123</div>
<div class="cell" style="left:926px;top:423px;width:218px;height:23px;background:#f2f2f2;color:#595959;line-height:23px">Leather</div>
<div class="cell" style="left:1145px;top:423px;width:260px;height:23px;background:#f2f2f2;color:#595959;line-height:23px">Hydes Inc</div>
<div class="cell" style="left:1406px;top:423px;width:81px;height:23px;background:#fff;color:#000;line-height:23px">35</div>
<div class="cell" style="left:1488px;top:423px;width:175px;height:23px;background:#fff;color:#000;line-height:23px">Backordered</div>
<div class="cell" style="left:1664px;top:423px;width:123px;height:23px;background:#fff;color:#000;line-height:23px">4/28/2022</div>
<div class="cell" style="left:1788px;top:423px;width:123px;height:23px;background:#f2f2f2;color:#595959;line-height:23px">52</div>
<div class="hl" style="left:48px;top:446px;width:1846px"></div>
<div class="cell" style="left:49px;top:447px;width:123px;height:23px;background:#fff;color:#262626;line-height:23px">3/13/2022</div>
<div class="cell" style="left:173px;top:447px;width:123px;height:23px;background:#f2f2f2;color:#595959;line-height:23px">2022</div>
<div class="cell" style="left:297px;top:447px;width:123px;height:23px;background:#f2f2f2;color:#595959;line-height:23px">Q1</div>
<div class="cell" style="left:421px;top:447px;width:123px;height:23px;background:#f2f2f2;color:#595959;line-height:23px">Mar</div>
<div class="cell" style="left:545px;top:447px;width:123px;height:23px;background:#f2f2f2;color:#595959;line-height:23px">W12</div>
<div class="cell" style="left:669px;top:447px;width:149px;height:23px;background:#fff;color:#262626;line-height:23px">PO114463</div>
<div class="cell" style="left:819px;top:447px;width:106px;height:23px;background:#fff;color:#262626;line-height:23px">Z890</div>
<div class="cell" style="left:926px;top:447px;width:218px;height:23px;background:#f2f2f2;color:#595959;line-height:23px">Sewing Machines</div>
<div class="cell" style="left:1145px;top:447px;width:260px;height:23px;background:#f2f2f2;color:#595959;line-height:23px">XYZ Warehouse</div>
<div class="cell" style="left:1406px;top:447px;width:81px;height:23px;background:#fff;color:#262626;line-height:23px">103</div>
<div class="cell" style="left:1488px;top:447px;width:175px;height:23px;background:#fff;color:#262626;line-height:23px">Delayed</div>
<div class="cell" style="left:1664px;top:447px;width:123px;height:23px;background:#fff;color:#262626;line-height:23px">5/10/2022</div>
<div class="cell" style="left:1788px;top:447px;width:123px;height:23px;background:#f2f2f2;color:#595959;line-height:23px">58</div>
<div class="hl" style="left:48px;top:470px;width:1846px"></div>
<div class="cell" style="left:49px;top:471px;width:123px;height:23px;background:#fff;color:#000;line-height:23px">5/14/2022</div>
<div class="cell" style="left:173px;top:471px;width:123px;height:23px;background:#f2f2f2;color:#595959;line-height:23px">2022</div>
<div class="cell" style="left:297px;top:471px;width:123px;height:23px;background:#f2f2f2;color:#595959;line-height:23px">Q2</div>
<div class="cell" style="left:421px;top:471px;width:123px;height:23px;background:#f2f2f2;color:#595959;line-height:23px">May</div>
<div class="cell" style="left:545px;top:471px;width:123px;height:23px;background:#f2f2f2;color:#595959;line-height:23px">W20</div>
<div class="cell" style="left:669px;top:471px;width:149px;height:23px;background:#fff;color:#000;line-height:23px">PO114464</div>
<div class="cell" style="left:819px;top:471px;width:106px;height:23px;background:#fff;color:#000;line-height:23px">986510</div>
<div class="cell" style="left:926px;top:471px;width:218px;height:23px;background:#f2f2f2;color:#595959;line-height:23px">Fabric (bundle)</div>
<div class="cell" style="left:1145px;top:471px;width:260px;height:23px;background:#f2f2f2;color:#595959;line-height:23px">ABC Co.</div>
<div class="cell" style="left:1406px;top:471px;width:81px;height:23px;background:#fff;color:#000;line-height:23px">147</div>
<div class="cell" style="left:1488px;top:471px;width:175px;height:23px;background:#fff;color:#000;line-height:23px">Preparing</div>
<div class="cell" style="left:1664px;top:471px;width:123px;height:23px;background:#fff;color:#000;line-height:23px">6/15/2022</div>
<div class="cell" style="left:1788px;top:471px;width:123px;height:23px;background:#f2f2f2;color:#595959;line-height:23px">32</div>
<div class="hl" style="left:48px;top:494px;width:1846px"></div>
<div class="cell" style="left:49px;top:495px;width:123px;height:23px;background:#fff;color:#262626;line-height:23px">4/23/2022</div>
<div class="cell" style="left:173px;top:495px;width:123px;height:23px;background:#f2f2f2;color:#595959;line-height:23px">2022</div>
<div class="cell" style="left:297px;top:495px;width:123px;height:23px;background:#f2f2f2;color:#595959;line-height:23px">Q2</div>
<div class="cell" style="left:421px;top:495px;width:123px;height:23px;background:#f2f2f2;color:#595959;line-height:23px">Apr</div>
<div class="cell" style="left:545px;top:495px;width:123px;height:23px;background:#f2f2f2;color:#595959;line-height:23px">W17</div>
<div class="cell" style="left:669px;top:495px;width:149px;height:23px;background:#fff;color:#262626;line-height:23px">PO114465</div>
<div class="cell" style="left:819px;top:495px;width:106px;height:23px;background:#fff;color:#262626;line-height:23px">B159</div>
<div class="cell" style="left:926px;top:495px;width:218px;height:23px;background:#f2f2f2;color:#595959;line-height:23px">Needles (case)</div>
<div class="cell" style="left:1145px;top:495px;width:260px;height:23px;background:#f2f2f2;color:#595959;line-height:23px">XYZ Warehouse</div>
<div class="cell" style="left:1406px;top:495px;width:81px;height:23px;background:#fff;color:#262626;line-height:23px">88</div>
<div class="cell" style="left:1488px;top:495px;width:175px;height:23px;background:#fff;color:#262626;line-height:23px">Shipped</div>
<div class="cell" style="left:1664px;top:495px;width:123px;height:23px;background:#fff;color:#262626;line-height:23px">6/22/2022</div>
<div class="cell" style="left:1788px;top:495px;width:123px;height:23px;background:#f2f2f2;color:#595959;line-height:23px">60</div>
<div class="hl" style="left:48px;top:518px;width:1846px"></div>
<div class="cell" style="left:49px;top:519px;width:123px;height:23px;background:#fff;color:#000;line-height:23px">6/27/2022</div>
<div class="cell" style="left:173px;top:519px;width:123px;height:23px;background:#f2f2f2;color:#595959;line-height:23px">2022</div>
<div class="cell" style="left:297px;top:519px;width:123px;height:23px;background:#f2f2f2;color:#595959;line-height:23px">Q2</div>
<div class="cell" style="left:421px;top:519px;width:123px;height:23px;background:#f2f2f2;color:#595959;line-height:23px">Jun</div>
<div class="cell" style="left:545px;top:519px;width:123px;height:23px;background:#f2f2f2;color:#595959;line-height:23px">W27</div>
<div class="cell" style="left:669px;top:519px;width:149px;height:23px;background:#fff;color:#000;line-height:23px">PO114466</div>
<div class="cell" style="left:819px;top:519px;width:106px;height:23px;background:#fff;color:#000;line-height:23px">B159</div>
<div class="cell" style="left:926px;top:519px;width:218px;height:23px;background:#f2f2f2;color:#595959;line-height:23px">Needles (case)</div>
<div class="cell" style="left:1145px;top:519px;width:260px;height:23px;background:#f2f2f2;color:#595959;line-height:23px">XYZ Warehouse</div>
<div class="cell" style="left:1406px;top:519px;width:81px;height:23px;background:#fff;color:#000;line-height:23px">22</div>
<div class="cell" style="left:1488px;top:519px;width:175px;height:23px;background:#fff;color:#000;line-height:23px">Delivered</div>
<div class="cell" style="left:1664px;top:519px;width:123px;height:23px;background:#fff;color:#000;line-height:23px">7/31/2022</div>
<div class="cell" style="left:1788px;top:519px;width:123px;height:23px;background:#f2f2f2;color:#595959;line-height:23px">34</div>
<div class="hl" style="left:48px;top:542px;width:1846px"></div>
<div class="cell" style="left:49px;top:543px;width:123px;height:23px;background:#fff;color:#262626;line-height:23px">1/16/2022</div>
<div class="cell" style="left:173px;top:543px;width:123px;height:23px;background:#f2f2f2;color:#595959;line-height:23px">2022</div>
<div class="cell" style="left:297px;top:543px;width:123px;height:23px;background:#f2f2f2;color:#595959;line-height:23px">Q1</div>
<div class="cell" style="left:421px;top:543px;width:123px;height:23px;background:#f2f2f2;color:#595959;line-height:23px">Jan</div>
<div class="cell" style="left:545px;top:543px;width:123px;height:23px;background:#f2f2f2;color:#595959;line-height:23px">W4</div>
<div class="cell" style="left:669px;top:543px;width:149px;height:23px;background:#fff;color:#262626;line-height:23px">PO114467</div>
<div class="cell" style="left:819px;top:543px;width:106px;height:23px;background:#fff;color:#262626;line-height:23px">Z890</div>
<div class="cell" style="left:926px;top:543px;width:218px;height:23px;background:#f2f2f2;color:#595959;line-height:23px">Sewing Machines</div>
<div class="cell" style="left:1145px;top:543px;width:260px;height:23px;background:#f2f2f2;color:#595959;line-height:23px">XYZ Warehouse</div>
<div class="cell" style="left:1406px;top:543px;width:81px;height:23px;background:#fff;color:#262626;line-height:23px">28</div>
<div class="cell" style="left:1488px;top:543px;width:175px;height:23px;background:#fff;color:#262626;line-height:23px">Delivered</div>
<div class="cell" style="left:1664px;top:543px;width:123px;height:23px;background:#fff;color:#262626;line-height:23px">3/5/2022</div>
<div class="cell" style="left:1788px;top:543px;width:123px;height:23px;background:#f2f2f2;color:#595959;line-height:23px">48</div>
<div class="hl" style="left:48px;top:566px;width:1846px"></div>
<div class="cell" style="left:49px;top:567px;width:123px;height:23px;background:#fff;color:#000;line-height:23px">2/3/2022</div>
<div class="cell" style="left:173px;top:567px;width:123px;height:23px;background:#f2f2f2;color:#595959;line-height:23px">2022</div>
<div class="cell" style="left:297px;top:567px;width:123px;height:23px;background:#f2f2f2;color:#595959;line-height:23px">Q1</div>
<div class="cell" style="left:421px;top:567px;width:123px;height:23px;background:#f2f2f2;color:#595959;line-height:23px">Feb</div>
<div class="cell" style="left:545px;top:567px;width:123px;height:23px;background:#f2f2f2;color:#595959;line-height:23px">W6</div>
<div class="cell" style="left:669px;top:567px;width:149px;height:23px;background:#fff;color:#000;line-height:23px">PO114468</div>
<div class="cell" style="left:819px;top:567px;width:106px;height:23px;background:#fff;color:#000;line-height:23px">B159</div>
<div class="cell" style="left:926px;top:567px;width:218px;height:23px;background:#f2f2f2;color:#595959;line-height:23px">Needles (case)</div>
<div class="cell" style="left:1145px;top:567px;width:260px;height:23px;background:#f2f2f2;color:#595959;line-height:23px">XYZ Warehouse</div>
<div class="cell" style="left:1406px;top:567px;width:81px;height:23px;background:#fff;color:#000;line-height:23px">37</div>
<div class="cell" style="left:1488px;top:567px;width:175px;height:23px;background:#fff;color:#000;line-height:23px">Delivered</div>
<div class="cell" style="left:1664px;top:567px;width:123px;height:23px;background:#fff;color:#000;line-height:23px">3/29/2022</div>
<div class="cell" style="left:1788px;top:567px;width:123px;height:23px;background:#f2f2f2;color:#595959;line-height:23px">54</div>
<div class="hl" style="left:48px;top:590px;width:1846px"></div>
<div class="cell" style="left:49px;top:591px;width:123px;height:23px;background:#fff;color:#262626;line-height:23px">3/17/2022</div>
<div class="cell" style="left:173px;top:591px;width:123px;height:23px;background:#f2f2f2;color:#595959;line-height:23px">2022</div>
<div class="cell" style="left:297px;top:591px;width:123px;height:23px;background:#f2f2f2;color:#595959;line-height:23px">Q1</div>
<div class="cell" style="left:421px;top:591px;width:123px;height:23px;background:#f2f2f2;color:#595959;line-height:23px">Mar</div>
<div class="cell" style="left:545px;top:591px;width:123px;height:23px;background:#f2f2f2;color:#595959;line-height:23px">W12</div>
<div class="cell" style="left:669px;top:591px;width:149px;height:23px;background:#fff;color:#262626;line-height:23px">PO114469</div>
<div class="cell" style="left:819px;top:591px;width:106px;height:23px;background:#fff;color:#262626;line-height:23px">Z890</div>
<div class="cell" style="left:926px;top:591px;width:218px;height:23px;background:#f2f2f2;color:#595959;line-height:23px">Sewing Machines</div>
<div class="cell" style="left:1145px;top:591px;width:260px;height:23px;background:#f2f2f2;color:#595959;line-height:23px">XYZ Warehouse</div>
<div class="cell" style="left:1406px;top:591px;width:81px;height:23px;background:#fff;color:#262626;line-height:23px">55</div>
<div class="cell" style="left:1488px;top:591px;width:175px;height:23px;background:#fff;color:#262626;line-height:23px">Canceled</div>
<div class="cell" style="left:1664px;top:591px;width:123px;height:23px;background:#fff;color:#262626;line-height:23px">5/12/2022</div>
<div class="cell" style="left:1788px;top:591px;width:123px;height:23px;background:#f2f2f2;color:#595959;line-height:23px">56</div>
<div class="hl" style="left:48px;top:614px;width:1846px"></div>
<div class="cell" style="left:49px;top:615px;width:123px;height:23px;background:#fff;color:#000;line-height:23px">3/9/2022</div>
<div class="cell" style="left:173px;top:615px;width:123px;height:23px;background:#f2f2f2;color:#595959;line-height:23px">2022</div>
<div class="cell" style="left:297px;top:615px;width:123px;height:23px;background:#f2f2f2;color:#595959;line-height:23px">Q1</div>
<div class="cell" style="left:421px;top:615px;width:123px;height:23px;background:#f2f2f2;color:#595959;line-height:23px">Mar</div>
<div class="cell" style="left:545px;top:615px;width:123px;height:23px;background:#f2f2f2;color:#595959;line-height:23px">W11</div>
<div class="cell" style="left:669px;top:615px;width:149px;height:23px;background:#fff;color:#000;line-height:23px">PO114470</div>
<div class="cell" style="left:819px;top:615px;width:106px;height:23px;background:#fff;color:#000;line-height:23px">980123</div>
<div class="cell" style="left:926px;top:615px;width:218px;height:23px;background:#f2f2f2;color:#595959;line-height:23px">Leather</div>
<div class="cell" style="left:1145px;top:615px;width:260px;height:23px;background:#f2f2f2;color:#595959;line-height:23px">Hydes Inc</div>
<div class="cell" style="left:1406px;top:615px;width:81px;height:23px;background:#fff;color:#000;line-height:23px">176</div>
<div class="cell" style="left:1488px;top:615px;width:175px;height:23px;background:#fff;color:#000;line-height:23px">Shipped</div>
<div class="cell" style="left:1664px;top:615px;width:123px;height:23px;background:#fff;color:#000;line-height:23px">4/28/2022</div>
<div class="cell" style="left:1788px;top:615px;width:123px;height:23px;background:#f2f2f2;color:#595959;line-height:23px">50</div>
<div class="hl" style="left:48px;top:638px;width:1846px"></div>
<div class="cell" style="left:49px;top:639px;width:123px;height:23px;background:#fff;color:#262626;line-height:23px">4/25/2022</div>
<div class="cell" style="left:173px;top:639px;width:123px;height:23px;background:#f2f2f2;color:#595959;line-height:23px">2022</div>
<div class="cell" style="left:297px;top:639px;width:123px;height:23px;background:#f2f2f2;color:#595959;line-height:23px">Q2</div>
<div class="cell" style="left:421px;top:639px;width:123px;height:23px;background:#f2f2f2;color:#595959;line-height:23px">Apr</div>
<div class="cell" style="left:545px;top:639px;width:123px;height:23px;background:#f2f2f2;color:#595959;line-height:23px">W18</div>
<div class="cell" style="left:669px;top:639px;width:149px;height:23px;background:#fff;color:#262626;line-height:23px">PO114471</div>
<div class="cell" style="left:819px;top:639px;width:106px;height:23px;background:#fff;color:#262626;line-height:23px">Z890</div>
<div class="cell" style="left:926px;top:639px;width:218px;height:23px;background:#f2f2f2;color:#595959;line-height:23px">Sewing Machines</div>
<div class="cell" style="left:1145px;top:639px;width:260px;height:23px;background:#f2f2f2;color:#595959;line-height:23px">XYZ Warehouse</div>
<div class="cell" style="left:1406px;top:639px;width:81px;height:23px;background:#fff;color:#262626;line-height:23px">182</div>
<div class="cell" style="left:1488px;top:639px;width:175px;height:23px;background:#fff;color:#262626;line-height:23px">Ordered</div>
<div class="cell" style="left:1664px;top:639px;width:123px;height:23px;background:#fff;color:#262626;line-height:23px">6/24/2022</div>
<div class="cell" style="left:1788px;top:639px;width:123px;height:23px;background:#f2f2f2;color:#595959;line-height:23px">60</div>
<div class="hl" style="left:48px;top:662px;width:1846px"></div>
<div class="cell" style="left:49px;top:663px;width:123px;height:23px;background:#fff;color:#000;line-height:23px">3/24/2022</div>
<div class="cell" style="left:173px;top:663px;width:123px;height:23px;background:#f2f2f2;color:#595959;line-height:23px">2022</div>
<div class="cell" style="left:297px;top:663px;width:123px;height:23px;background:#f2f2f2;color:#595959;line-height:23px">Q1</div>
<div class="cell" style="left:421px;top:663px;width:123px;height:23px;background:#f2f2f2;color:#595959;line-height:23px">Mar</div>
<div class="cell" style="left:545px;top:663px;width:123px;height:23px;background:#f2f2f2;color:#595959;line-height:23px">W13</div>
<div class="cell" style="left:669px;top:663px;width:149px;height:23px;background:#fff;color:#000;line-height:23px">PO114472</div>
<div class="cell" style="left:819px;top:663px;width:106px;height:23px;background:#fff;color:#000;line-height:23px">986510</div>
<div class="cell" style="left:926px;top:663px;width:218px;height:23px;background:#f2f2f2;color:#595959;line-height:23px">Fabric (bundle)</div>
<div class="cell" style="left:1145px;top:663px;width:260px;height:23px;background:#f2f2f2;color:#595959;line-height:23px">ABC Co.</div>
<div class="cell" style="left:1406px;top:663px;width:81px;height:23px;background:#fff;color:#000;line-height:23px">29</div>
<div class="cell" style="left:1488px;top:663px;width:175px;height:23px;background:#fff;color:#000;line-height:23px">Backordered</div>
<div class="cell" style="left:1664px;top:663px;width:123px;height:23px;background:#fff;color:#000;line-height:23px">5/19/2022</div>
<div class="cell" style="left:1788px;top:663px;width:123px;height:23px;background:#f2f2f2;color:#595959;line-height:23px">56</div>
<div class="hl" style="left:48px;top:686px;width:1846px"></div>
<div class="cell" style="left:49px;top:687px;width:123px;height:23px;background:#fff;color:#262626;line-height:23px">6/12/2022</div>
<div class="cell" style="left:173px;top:687px;width:123px;height:23px;background:#f2f2f2;color:#595959;line-height:23px">2022</div>
<div class="cell" style="left:297px;top:687px;width:123px;height:23px;background:#f2f2f2;color:#595959;line-height:23px">Q2</div>
<div class="cell" style="left:421px;top:687px;width:123px;height:23px;background:#f2f2f2;color:#595959;line-height:23px">Jun</div>
<div class="cell" style="left:545px;top:687px;width:123px;height:23px;background:#f2f2f2;color:#595959;line-height:23px">W25</div>
<div class="cell" style="left:669px;top:687px;width:149px;height:23px;background:#fff;color:#262626;line-height:23px">PO114473</div>
<div class="cell" style="left:819px;top:687px;width:106px;height:23px;background:#fff;color:#262626;line-height:23px">Z890</div>
<div class="cell" style="left:926px;top:687px;width:218px;height:23px;background:#f2f2f2;color:#595959;line-height:23px">Sewing Machines</div>
<div class="cell" style="left:1145px;top:687px;width:260px;height:23px;background:#f2f2f2;color:#595959;line-height:23px">XYZ Warehouse</div>
<div class="cell" style="left:1406px;top:687px;width:81px;height:23px;background:#fff;color:#262626;line-height:23px">150</div>
<div class="cell" style="left:1488px;top:687px;width:175px;height:23px;background:#fff;color:#262626;line-height:23px">Backordered</div>
<div class="cell" style="left:1664px;top:687px;width:123px;height:23px;background:#fff;color:#262626;line-height:23px">7/14/2022</div>
<div class="cell" style="left:1788px;top:687px;width:123px;height:23px;background:#f2f2f2;color:#595959;line-height:23px">32</div>
<div class="hl" style="left:48px;top:710px;width:1846px"></div>
<div class="cell" style="left:49px;top:711px;width:123px;height:23px;background:#fff;color:#000;line-height:23px">5/22/2022</div>
<div class="cell" style="left:173px;top:711px;width:123px;height:23px;background:#f2f2f2;color:#595959;line-height:23px">2022</div>
<div class="cell" style="left:297px;top:711px;width:123px;height:23px;background:#f2f2f2;color:#595959;line-height:23px">Q2</div>
<div class="cell" style="left:421px;top:711px;width:123px;height:23px;background:#f2f2f2;color:#595959;line-height:23px">May</div>
<div class="cell" style="left:545px;top:711px;width:123px;height:23px;background:#f2f2f2;color:#595959;line-height:23px">W22</div>
<div class="cell" style="left:669px;top:711px;width:149px;height:23px;background:#fff;color:#000;line-height:23px">PO114474</div>
<div class="cell" style="left:819px;top:711px;width:106px;height:23px;background:#fff;color:#000;line-height:23px">986510</div>
<div class="cell" style="left:926px;top:711px;width:218px;height:23px;background:#f2f2f2;color:#595959;line-height:23px">Fabric (bundle)</div>
<div class="cell" style="left:1145px;top:711px;width:260px;height:23px;background:#f2f2f2;color:#595959;line-height:23px">ABC Co.</div>
<div class="cell" style="left:1406px;top:711px;width:81px;height:23px;background:#fff;color:#000;line-height:23px">30</div>
<div class="cell" style="left:1488px;top:711px;width:175px;height:23px;background:#fff;color:#000;line-height:23px">Preparing</div>
<div class="cell" style="left:1664px;top:711px;width:123px;height:23px;background:#fff;color:#000;line-height:23px">7/19/2022</div>
<div class="cell" style="left:1788px;top:711px;width:123px;height:23px;background:#f2f2f2;color:#595959;line-height:23px">58</div>
<div class="hl" style="left:48px;top:734px;width:1846px"></div>
<div class="cell" style="left:49px;top:735px;width:123px;height:23px;background:#fff;color:#262626;line-height:23px">5/10/2022</div>
<div class="cell" style="left:173px;top:735px;width:123px;height:23px;background:#f2f2f2;color:#595959;line-height:23px">2022</div>
<div class="cell" style="left:297px;top:735px;width:123px;height:23px;background:#f2f2f2;color:#595959;line-height:23px">Q2</div>
<div class="cell" style="left:421px;top:735px;width:123px;height:23px;background:#f2f2f2;color:#595959;line-height:23px">May</div>
<div class="cell" style="left:545px;top:735px;width:123px;height:23px;background:#f2f2f2;color:#595959;line-height:23px">W20</div>
<div class="cell" style="left:669px;top:735px;width:149px;height:23px;background:#fff;color:#262626;line-height:23px">PO114475</div>
<div class="cell" style="left:819px;top:735px;width:106px;height:23px;background:#fff;color:#262626;line-height:23px">B159</div>
<div class="cell" style="left:926px;top:735px;width:218px;height:23px;background:#f2f2f2;color:#595959;line-height:23px">Needles (case)</div>
<div class="cell" style="left:1145px;top:735px;width:260px;height:23px;background:#f2f2f2;color:#595959;line-height:23px">XYZ Warehouse</div>
<div class="cell" style="left:1406px;top:735px;width:81px;height:23px;background:#fff;color:#262626;line-height:23px">121</div>
<div class="cell" style="left:1488px;top:735px;width:175px;height:23px;background:#fff;color:#262626;line-height:23px">Backordered</div>
<div class="cell" style="left:1664px;top:735px;width:123px;height:23px;background:#fff;color:#262626;line-height:23px">6/24/2022</div>
<div class="cell" style="left:1788px;top:735px;width:123px;height:23px;background:#f2f2f2;color:#595959;line-height:23px">45</div>
<div class="hl" style="left:48px;top:758px;width:1846px"></div>
<div class="cell" style="left:49px;top:759px;width:123px;height:23px;background:#fff;color:#000;line-height:23px">4/5/2022</div>
<div class="cell" style="left:173px;top:759px;width:123px;height:23px;background:#f2f2f2;color:#595959;line-height:23px">2022</div>
<div class="cell" style="left:297px;top:759px;width:123px;height:23px;background:#f2f2f2;color:#595959;line-height:23px">Q2</div>
<div class="cell" style="left:421px;top:759px;width:123px;height:23px;background:#f2f2f2;color:#595959;line-height:23px">Apr</div>
<div class="cell" style="left:545px;top:759px;width:123px;height:23px;background:#f2f2f2;color:#595959;line-height:23px">W15</div>
<div class="cell" style="left:669px;top:759px;width:149px;height:23px;background:#fff;color:#000;line-height:23px">PO114476</div>
<div class="cell" style="left:819px;top:759px;width:106px;height:23px;background:#fff;color:#000;line-height:23px">986510</div>
<div class="cell" style="left:926px;top:759px;width:218px;height:23px;background:#f2f2f2;color:#595959;line-height:23px">Fabric (bundle)</div>
<div class="cell" style="left:1145px;top:759px;width:260px;height:23px;background:#f2f2f2;color:#595959;line-height:23px">ABC Co.</div>
<div class="cell" style="left:1406px;top:759px;width:81px;height:23px;background:#fff;color:#000;line-height:23px">156</div>
<div class="cell" style="left:1488px;top:759px;width:175px;height:23px;background:#fff;color:#000;line-height:23px">Delivered</div>
<div class="cell" style="left:1664px;top:759px;width:123px;height:23px;background:#fff;color:#000;line-height:23px">5/12/2022</div>
<div class="cell" style="left:1788px;top:759px;width:123px;height:23px;background:#f2f2f2;color:#595959;line-height:23px">37</div>
<div class="hl" style="left:48px;top:782px;width:1846px"></div>
<div class="cell" style="left:49px;top:783px;width:123px;height:23px;background:#fff;color:#262626;line-height:23px">4/8/2022</div>
<div class="cell" style="left:173px;top:783px;width:123px;height:23px;background:#f2f2f2;color:#595959;line-height:23px">2022</div>
<div class="cell" style="left:297px;top:783px;width:123px;height:23px;background:#f2f2f2;color:#595959;line-height:23px">Q2</div>
<div class="cell" style="left:421px;top:783px;width:123px;height:23px;background:#f2f2f2;color:#595959;line-height:23px">Apr</div>
<div class="cell" style="left:545px;top:783px;width:123px;height:23px;background:#f2f2f2;color:#595959;line-height:23px">W15</div>
<div class="cell" style="left:669px;top:783px;width:149px;height:23px;background:#fff;color:#262626;line-height:23px">PO114477</div>
<div class="cell" style="left:819px;top:783px;width:106px;height:23px;background:#fff;color:#262626;line-height:23px">A456</div>
<div class="cell" style="left:926px;top:783px;width:218px;height:23px;background:#f2f2f2;color:#595959;line-height:23px">Thread (case)</div>
<div class="cell" style="left:1145px;top:783px;width:260px;height:23px;background:#f2f2f2;color:#595959;line-height:23px">XYZ Warehouse</div>
<div class="cell" style="left:1406px;top:783px;width:81px;height:23px;background:#fff;color:#262626;line-height:23px">190</div>
<div class="cell" style="left:1488px;top:783px;width:175px;height:23px;background:#fff;color:#262626;line-height:23px">Canceled</div>
<div class="cell" style="left:1664px;top:783px;width:123px;height:23px;background:#fff;color:#262626;line-height:23px">5/9/2022</div>
<div class="cell" style="left:1788px;top:783px;width:123px;height:23px;background:#f2f2f2;color:#595959;line-height:23px">31</div>
<div class="hl" style="left:48px;top:806px;width:1846px"></div>
<div class="cell" style="left:49px;top:807px;width:123px;height:23px;background:#fff;color:#000;line-height:23px">4/28/2022</div>
<div class="cell" style="left:173px;top:807px;width:123px;height:23px;background:#f2f2f2;color:#595959;line-height:23px">2022</div>
<div class="cell" style="left:297px;top:807px;width:123px;height:23px;background:#f2f2f2;color:#595959;line-height:23px">Q2</div>
<div class="cell" style="left:421px;top:807px;width:123px;height:23px;background:#f2f2f2;color:#595959;line-height:23px">Apr</div>
<div class="cell" style="left:545px;top:807px;width:123px;height:23px;background:#f2f2f2;color:#595959;line-height:23px">W18</div>
<div class="cell" style="left:669px;top:807px;width:149px;height:23px;background:#fff;color:#000;line-height:23px">PO114478</div>
<div class="cell" style="left:819px;top:807px;width:106px;height:23px;background:#fff;color:#000;line-height:23px">980123</div>
<div class="cell" style="left:926px;top:807px;width:218px;height:23px;background:#f2f2f2;color:#595959;line-height:23px">Leather</div>
<div class="cell" style="left:1145px;top:807px;width:260px;height:23px;background:#f2f2f2;color:#595959;line-height:23px">Hydes Inc</div>
<div class="cell" style="left:1406px;top:807px;width:81px;height:23px;background:#fff;color:#000;line-height:23px">181</div>
<div class="cell" style="left:1488px;top:807px;width:175px;height:23px;background:#fff;color:#000;line-height:23px">Delayed</div>
<div class="cell" style="left:1664px;top:807px;width:123px;height:23px;background:#fff;color:#000;line-height:23px">6/3/2022</div>
<div class="cell" style="left:1788px;top:807px;width:123px;height:23px;background:#f2f2f2;color:#595959;line-height:23px">36</div>
<div class="hl" style="left:48px;top:830px;width:1846px"></div>
<div class="cell" style="left:49px;top:831px;width:123px;height:23px;background:#fff;color:#262626;line-height:23px">2/11/2022</div>
<div class="cell" style="left:173px;top:831px;width:123px;height:23px;background:#f2f2f2;color:#595959;line-height:23px">2022</div>
<div class="cell" style="left:297px;top:831px;width:123px;height:23px;background:#f2f2f2;color:#595959;line-height:23px">Q1</div>
<div class="cell" style="left:421px;top:831px;width:123px;height:23px;background:#f2f2f2;color:#595959;line-height:23px">Feb</div>
<div class="cell" style="left:545px;top:831px;width:123px;height:23px;background:#f2f2f2;color:#595959;line-height:23px">W7</div>
<div class="cell" style="left:669px;top:831px;width:149px;height:23px;background:#fff;color:#262626;line-height:23px">PO114479</div>
<div class="cell" style="left:819px;top:831px;width:106px;height:23px;background:#fff;color:#262626;line-height:23px">980123</div>
<div class="cell" style="left:926px;top:831px;width:218px;height:23px;background:#f2f2f2;color:#595959;line-height:23px">Leather</div>
<div class="cell" style="left:1145px;top:831px;width:260px;height:23px;background:#f2f2f2;color:#595959;line-height:23px">Hydes Inc</div>
<div class="cell" style="left:1406px;top:831px;width:81px;height:23px;background:#fff;color:#262626;line-height:23px">181</div>
<div class="cell" style="left:1488px;top:831px;width:175px;height:23px;background:#fff;color:#262626;line-height:23px">Ordered</div>
<div class="cell" style="left:1664px;top:831px;width:123px;height:23px;background:#fff;color:#262626;line-height:23px">3/27/2022</div>
<div class="cell" style="left:1788px;top:831px;width:123px;height:23px;background:#f2f2f2;color:#595959;line-height:23px">44</div>
<div class="hl" style="left:48px;top:854px;width:1846px"></div>
<div class="cell" style="left:49px;top:855px;width:123px;height:23px;background:#fff;color:#000;line-height:23px">6/27/2022</div>
<div class="cell" style="left:173px;top:855px;width:123px;height:23px;background:#f2f2f2;color:#595959;line-height:23px">2022</div>
<div class="cell" style="left:297px;top:855px;width:123px;height:23px;background:#f2f2f2;color:#595959;line-height:23px">Q2</div>
<div class="cell" style="left:421px;top:855px;width:123px;height:23px;background:#f2f2f2;color:#595959;line-height:23px">Jun</div>
<div class="cell" style="left:545px;top:855px;width:123px;height:23px;background:#f2f2f2;color:#595959;line-height:23px">W27</div>
<div class="cell" style="left:669px;top:855px;width:149px;height:23px;background:#fff;color:#000;line-height:23px">PO114480</div>
<div class="cell" style="left:819px;top:855px;width:106px;height:23px;background:#fff;color:#000;line-height:23px">980123</div>
<div class="cell" style="left:926px;top:855px;width:218px;height:23px;background:#f2f2f2;color:#595959;line-height:23px">Leather</div>
<div class="cell" style="left:1145px;top:855px;width:260px;height:23px;background:#f2f2f2;color:#595959;line-height:23px">Hydes Inc</div>
<div class="cell" style="left:1406px;top:855px;width:81px;height:23px;background:#fff;color:#000;line-height:23px">177</div>
<div class="cell" style="left:1488px;top:855px;width:175px;height:23px;background:#fff;color:#000;line-height:23px">Delayed</div>
<div class="cell" style="left:1664px;top:855px;width:123px;height:23px;background:#fff;color:#000;line-height:23px">8/23/2022</div>
<div class="cell" style="left:1788px;top:855px;width:123px;height:23px;background:#f2f2f2;color:#595959;line-height:23px">57</div>
<div class="hl" style="left:48px;top:878px;width:1846px"></div>
<div class="cell" style="left:49px;top:879px;width:123px;height:20px;background:#fff;color:#262626;line-height:20px"></div>
<div class="cell" style="left:173px;top:879px;width:123px;height:20px;background:#f2f2f2;color:#595959;line-height:20px"></div>
<div class="cell" style="left:297px;top:879px;width:123px;height:20px;background:#f2f2f2;color:#595959;line-height:20px"></div>
<div class="cell" style="left:421px;top:879px;width:123px;height:20px;background:#f2f2f2;color:#595959;line-height:20px"></div>
<div class="cell" style="left:545px;top:879px;width:123px;height:20px;background:#f2f2f2;color:#595959;line-height:20px"></div>
<div class="cell" style="left:669px;top:879px;width:149px;height:20px;background:#fff;color:#262626;line-height:20px"></div>
<div class="cell" style="left:819px;top:879px;width:106px;height:20px;background:#fff;color:#262626;line-height:20px"></div>
<div class="cell" style="left:926px;top:879px;width:218px;height:20px;background:#f2f2f2;color:#595959;line-height:20px"></div>
<div class="cell" style="left:1145px;top:879px;width:260px;height:20px;background:#f2f2f2;color:#595959;line-height:20px"></div>
<div class="cell" style="left:1406px;top:879px;width:81px;height:20px;background:#fff;color:#262626;line-height:20px"></div>
<div class="cell" style="left:1488px;top:879px;width:175px;height:20px;background:#fff;color:#262626;line-height:20px"></div>
<div class="cell" style="left:1664px;top:879px;width:123px;height:20px;background:#fff;color:#262626;line-height:20px"></div>
<div class="cell" style="left:1788px;top:879px;width:123px;height:20px;background:#f2f2f2;color:#595959;line-height:20px"></div>
<div class="hl" style="left:48px;top:899px;width:1846px"></div>
<div class="vl" style="left:172px;top:183px;height:717px"></div>
<div class="vl" style="left:296px;top:183px;height:717px"></div>
<div class="vl" style="left:420px;top:183px;height:717px"></div>
<div class="vl" style="left:544px;top:183px;height:717px"></div>
<div class="vl" style="left:668px;top:183px;height:717px"></div>
<div class="vl" style="left:818px;top:183px;height:717px"></div>
<div class="vl" style="left:925px;top:183px;height:717px"></div>
<div class="vl" style="left:1144px;top:183px;height:717px"></div>
<div class="vl" style="left:1405px;top:183px;height:717px"></div>
<div class="vl" style="left:1487px;top:183px;height:717px"></div>
<div class="vl" style="left:1663px;top:183px;height:717px"></div>
<div class="vl" style="left:1787px;top:183px;height:717px"></div>
<div class="vl" style="left:1911px;top:183px;height:717px"></div>
<div class="a" style="left:1895px;top:29px;width:23px;height:960px;background:#f0f0f0"></div>
<div class="a" style="left:1897px;top:30px;width:20px;height:951px;background:#f5f5f5;border-radius:10px"></div>
<svg class="a" style="left:1894px;top:29px" width="24" height="951"><path d="M8.5 14 L13.5 6.5 L18.5 14z" fill="#707070" stroke="#707070" stroke-linejoin="round" stroke-width="1.5"/><path d="M8.5 938 L13.5 945.5 L18.5 938z" fill="#707070" stroke="#707070" stroke-linejoin="round" stroke-width="1.5"/></svg>
<div class="a" style="left:1902px;top:50px;width:11px;height:897px;background:#6f6f6f;border-radius:6px"></div>
<div class="a" style="left:0;top:980px;width:1895px;height:1px;background:#dcdcdc"></div>
<div class="a" style="left:1894px;top:51px;width:1px;height:930px;background:#e2e2e2"></div>
<svg class="a" style="left:25px;top:988px" width="60" height="24"><path d="M13.5 5 L7.5 10.5 L13.5 16.5" fill="none" stroke="#949494" stroke-width="1.4"/><path d="M48.5 5 L54.5 10.5 L48.5 16.5" fill="none" stroke="#949494" stroke-width="1.4"/></svg>
<div class="tab" style="left:141px;width:113px;background:#134f6b;color:#fff">Instructions</div>
<div class="tab" style="left:265px;width:55px;background:#a1a8ae;color:#1a1a1a">Lists</div>
<div class="tab" style="left:331px;width:125px;background:#2ab58b;color:#1a1a1a">Shipping Log</div>
<div class="tab" style="left:609px;width:182px;background:#134f6b;color:#fff">Shipping Dashboard</div>
<div class="tab" style="left:802px;width:188px;background:#134f6b;color:#fff">Receiving Dashboard</div>
<svg class="a" style="left:450px;top:975px" width="165" height="42"><path d="M0 5.5H10.5A6 6 0 0 1 16.5 11.5V33.5A6 6 0 0 0 22.5 39.5H142.5A6 6 0 0 0 148.5 33.5V11.5A6 6 0 0 1 154.5 5.5H165" fill="#fff" stroke="#d8d8d8" stroke-width="1"/><rect x="0" y="0" width="165" height="5" fill="#fff"/></svg>
<div class="a" style="left:467px;top:980px;width:130px;height:34px;background:linear-gradient(#ffffff 5%,#e6f6f0 40%,#aee0cd);border-radius:0 0 6px 6px;font-size:17.4px;text-align:center;line-height:24px;color:#1a1a1a;padding-top:4px">Receiving Log</div>
<div class="a" style="left:477px;top:1010px;width:111px;height:2px;background:#15894f"></div>
<div class="sep" style="left:259px"></div>
<div class="sep" style="left:325px"></div>
<div class="sep" style="left:461px"></div>
<div class="sep" style="left:603px"></div>
<div class="sep" style="left:796px"></div>
<div class="sep" style="left:995px"></div>
<svg class="a" style="left:1040px;top:989px" width="24" height="20"><path d="M15 2.5v15M7.5 10h15" stroke="#8a8a8a" stroke-width="1.3"/></svg>
<div class="a" style="left:1237px;top:994px;width:3px;height:3px;background:#1a1a1a"></div>
<div class="a" style="left:1237px;top:999px;width:3px;height:3px;background:#1a1a1a"></div>
<div class="a" style="left:1237px;top:1004px;width:3px;height:3px;background:#1a1a1a"></div>
<div class="a" style="left:1258px;top:989px;width:636px;height:21px;background:#f6f6f6;border-radius:10px"></div>
<svg class="a" style="left:1258px;top:989px" width="636" height="21"><path d="M6.5 10.5 L13.5 5.5 L13.5 15.5z" fill="#707070" stroke="#707070" stroke-linejoin="round" stroke-width="1.2"/><path d="M630 10.5 L622 5.5 L622 15.5z" fill="#707070" stroke="#707070" stroke-linejoin="round" stroke-width="1.2"/></svg>
<div class="a" style="left:1279px;top:994px;width:521px;height:11px;background:#6f6f6f;border-radius:6px"></div>
</body></html>
